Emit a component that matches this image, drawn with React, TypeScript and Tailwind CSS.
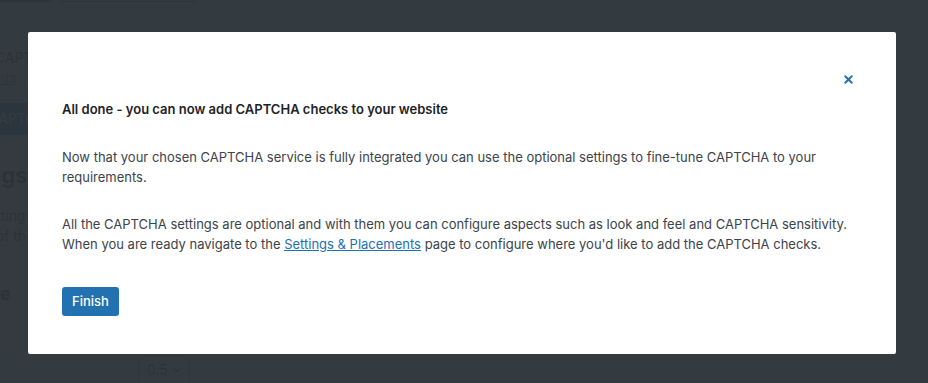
import React from 'react';
import { X } from 'lucide-react';

const font = { fontFamily: 'Inter, "Noto Sans", sans-serif' };

const App = () => {
  return (
    <div className="relative h-[383px] w-[928px] overflow-hidden bg-[#f0f0f1] text-[13px] text-[#1d2327]" style={font}>
      {/* Page behind the modal */}
      <div className="-mt-[28px] flex gap-2">
        <div className="h-[30px] w-[52px] rounded-[3px] bg-[#2271b1]" />
        <div className="h-[30px] w-[136px] rounded-[3px] border border-[#2271b1] bg-white" />
      </div>
      <div className="mt-[8px] border-t border-dashed border-[#c3c4c7]" />
      <div className="-ml-[60px] pt-[37px]">
        <p className="text-[14px] leading-[20px]">Choose CAPTCHA service</p>
        <a className="text-[14px] leading-[20px] text-[#2271b1] underline">Placements</a>
        <div className="mt-[14px]">
          <button className="h-[32px] rounded-[3px] bg-[#2271b1] px-3 text-[14px] text-white">Save CAPTCHA</button>
        </div>
        <h2 className="mt-[24px] text-[22px] font-semibold">Settings</h2>
        <p className="mt-[14px] text-[14px] leading-[20px]">Other settings</p>
        <p className="text-[14px] leading-[20px]">aspects of the form</p>
        <h3 className="mt-[34px] ml-[20px] text-[18px] font-semibold">Score</h3>
      </div>
      <div className="ml-[138px] mt-[48px] flex h-[30px] w-[52px] items-center gap-1 rounded-[3px] border border-[#8c8f94] bg-white px-2 text-[14px]">
        0.5
        <svg width="12" height="12" viewBox="0 0 12 12" fill="none" stroke="currentColor" strokeWidth="1.5"><path d="M2 4l4 4 4-4" /></svg>
      </div>

      {/* Overlay + modal */}
      <div className="absolute inset-0 bg-[#2c3338]/[0.96]">
        <div className="relative ml-[28px] mt-[32px] h-[322px] w-[868px] rounded-[2px] bg-white pl-[34px] pr-[34px] pt-[68px] text-[#3c434a]">
          <button className="absolute right-[41px] top-[41px] text-[#2271b1]">
            <X size={13} strokeWidth={3.5} />
          </button>
          <h2 className="text-[13px] font-semibold leading-[18px] text-[#1d2327]">
            All done - you can now add CAPTCHA checks to your website
          </h2>
          <p className="mt-[29px] leading-[20px]">
            Now that your chosen CAPTCHA service is fully integrated you can use the optional settings to fine-tune CAPTCHA to your requirements.
          </p>
          <p className="mt-[27px] leading-[20px]">
            All the CAPTCHA settings are optional and with them you can configure aspects such as look and feel and CAPTCHA sensitivity.
            <br />
            When you are ready navigate to the <a className="text-[#2271b1] underline">Settings &amp; Placements</a> page to configure where you'd like to add the CAPTCHA checks.
          </p>
          <button className="mt-[33px] h-[29px] w-[57px] rounded-[3px] bg-[#2271b1] text-[13px] font-medium text-white">
            Finish
          </button>
        </div>
      </div>
    </div>
  );
};

export default App;
